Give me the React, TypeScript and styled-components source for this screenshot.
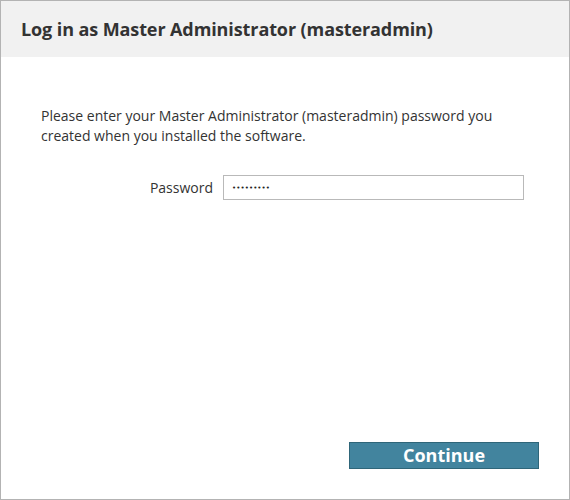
import styled, { createGlobalStyle } from "styled-components";

const GlobalStyle = createGlobalStyle`
    html, body {
        margin: 0;
        padding: 0;
        background: #ffffff;
    }
    body {
        font-family: "Open Sans", "Liberation Sans", sans-serif;
        color: #333333;
    }
`

const Frame = styled.div`
    display: flex;
    flex-direction: column;
    width: 570px;
    height: 500px;
    box-sizing: border-box;
    border: 1px solid #b3b3b3;
    background: #ffffff;
`

const Header = styled.header`
    display: flex;
    align-items: center;
    height: 56px;
    padding: 0 20px;
    background: #f1f1f1;

    h1 {
        margin: 0;
        font-size: 18px;
        font-weight: 700;
        color: #333333;
        letter-spacing: -0.1px;
    }
`

const Body = styled.main`
    flex: 1;
    padding: 49px 40px 0;
`

const Intro = styled.p`
    margin: 0 0 29px;
    font-size: 14px;
    line-height: 20px;
    color: #333333;
`

const FieldRow = styled.div`
    display: grid;
    grid-template-columns: 172px 301px;
    column-gap: 10px;
    align-items: center;

    label {
        text-align: right;
        font-size: 14px;
        color: #333333;
    }
`

const PasswordInput = styled.input`
    box-sizing: border-box;
    width: 301px;
    height: 25px;
    margin: 0;
    padding: 0 8px;
    border: 1px solid #b9b9b9;
    border-radius: 0;
    outline: none;
    font-family: "DejaVu Sans", sans-serif;
    font-size: 7px;
    letter-spacing: 0.1px;
    color: #222222;
`

const Footer = styled.footer`
    display: flex;
    justify-content: flex-end;
    padding: 0 30px 30px;
`

const PrimaryButton = styled.button`
    width: 190px;
    height: 27px;
    padding: 0;
    border: 1px solid #2f6679;
    border-radius: 0;
    background: #42849e;
    color: #ffffff;
    font-family: "Open Sans", "Liberation Sans", sans-serif;
    font-size: 18px;
    font-weight: 700;
    line-height: 25px;
    cursor: pointer;
`

export default function App() {
    return (
        <>
            <GlobalStyle />
            <Frame>
                <Header>
                    <h1>Log in as Master Administrator (masteradmin)</h1>
                </Header>
                <Body>
                    <Intro>
                        Please enter your Master Administrator (masteradmin) password you
                        <br />
                        created when you installed the software.
                    </Intro>
                    <FieldRow>
                        <label htmlFor="password">Password</label>
                        <PasswordInput id="password" type="password" defaultValue="masterpwd" />
                    </FieldRow>
                </Body>
                <Footer>
                    <PrimaryButton type="button">Continue</PrimaryButton>
                </Footer>
            </Frame>
        </>
    )
}
